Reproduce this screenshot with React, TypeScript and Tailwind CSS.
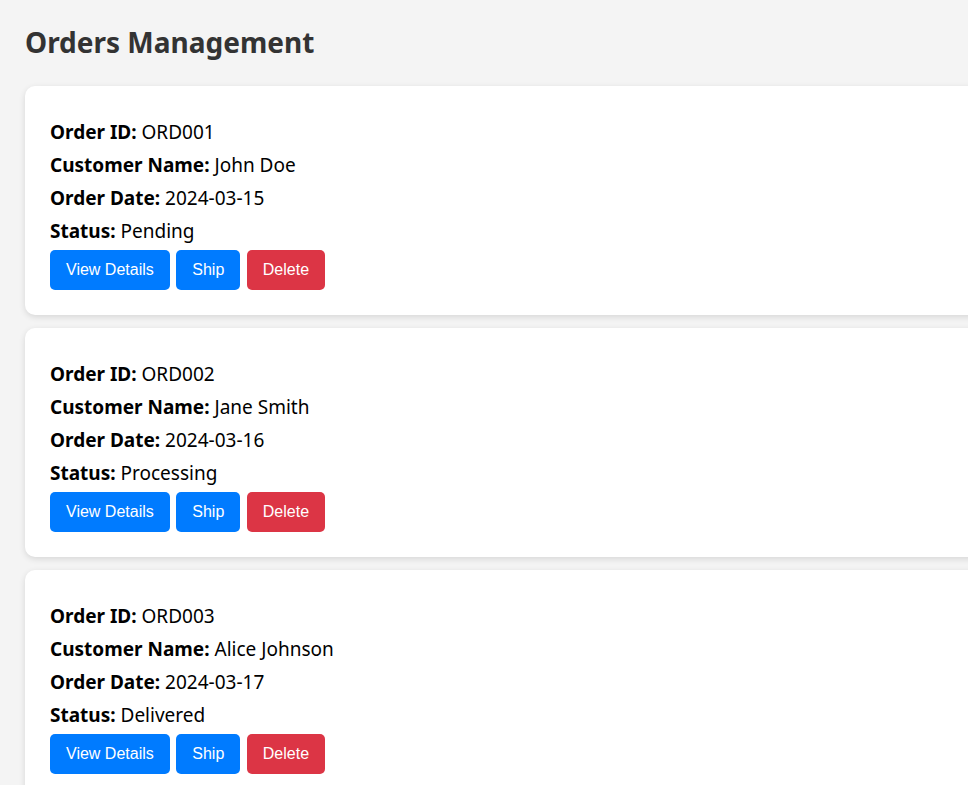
import React from 'react';

interface Order {
  id: string;
  customer: string;
  date: string;
  status: string;
}

const orders: Order[] = [
  { id: 'ORD001', customer: 'John Doe', date: '2024-03-15', status: 'Pending' },
  { id: 'ORD002', customer: 'Jane Smith', date: '2024-03-16', status: 'Processing' },
  { id: 'ORD003', customer: 'Alice Johnson', date: '2024-03-17', status: 'Delivered' },
];

function Field({ label, value }: { label: string; value: string }) {
  return (
    <p className="h-[26px] leading-[26px] text-[19px] text-black whitespace-nowrap">
      <span className="font-bold">{label}:</span> {value}
    </p>
  );
}

function ActionButton({ label, tone }: { label: string; tone: 'blue' | 'red' }) {
  return (
    <button
      className={
        'h-[40px] px-[16px] rounded-[5px] text-white text-[16px] font-["Liberation_Sans",Arial,sans-serif] ' +
        (tone === 'blue' ? 'bg-[#007bff]' : 'bg-[#dc3545]')
      }
    >
      {label}
    </button>
  );
}

function OrderCard({ order }: { order: Order }) {
  return (
    <div className="w-[1000px] bg-white rounded-[10px] shadow-[0_2px_6px_rgba(0,0,0,0.12)] pt-[33px] px-[25px] pb-[25px]">
      <div className="flex flex-col gap-[7px]">
        <Field label="Order ID" value={order.id} />
        <Field label="Customer Name" value={order.customer} />
        <Field label="Order Date" value={order.date} />
        <Field label="Status" value={order.status} />
      </div>
      <div className="flex gap-[6.5px] mt-[6px]">
        <ActionButton label="View Details" tone="blue" />
        <ActionButton label="Ship" tone="blue" />
        <ActionButton label="Delete" tone="red" />
      </div>
    </div>
  );
}

export default function App() {
  return (
    <div className="min-h-screen w-full overflow-hidden bg-[#f4f4f4] font-['Noto_Sans',sans-serif] pl-[25px] pt-[22px]">
      <h1 className="text-[28px] leading-[40px] font-bold text-[#333]">Orders Management</h1>
      <div className="mt-[24px] flex flex-col gap-[13px]">
        {orders.map((o) => (
          <OrderCard key={o.id} order={o} />
        ))}
      </div>
    </div>
  );
}
